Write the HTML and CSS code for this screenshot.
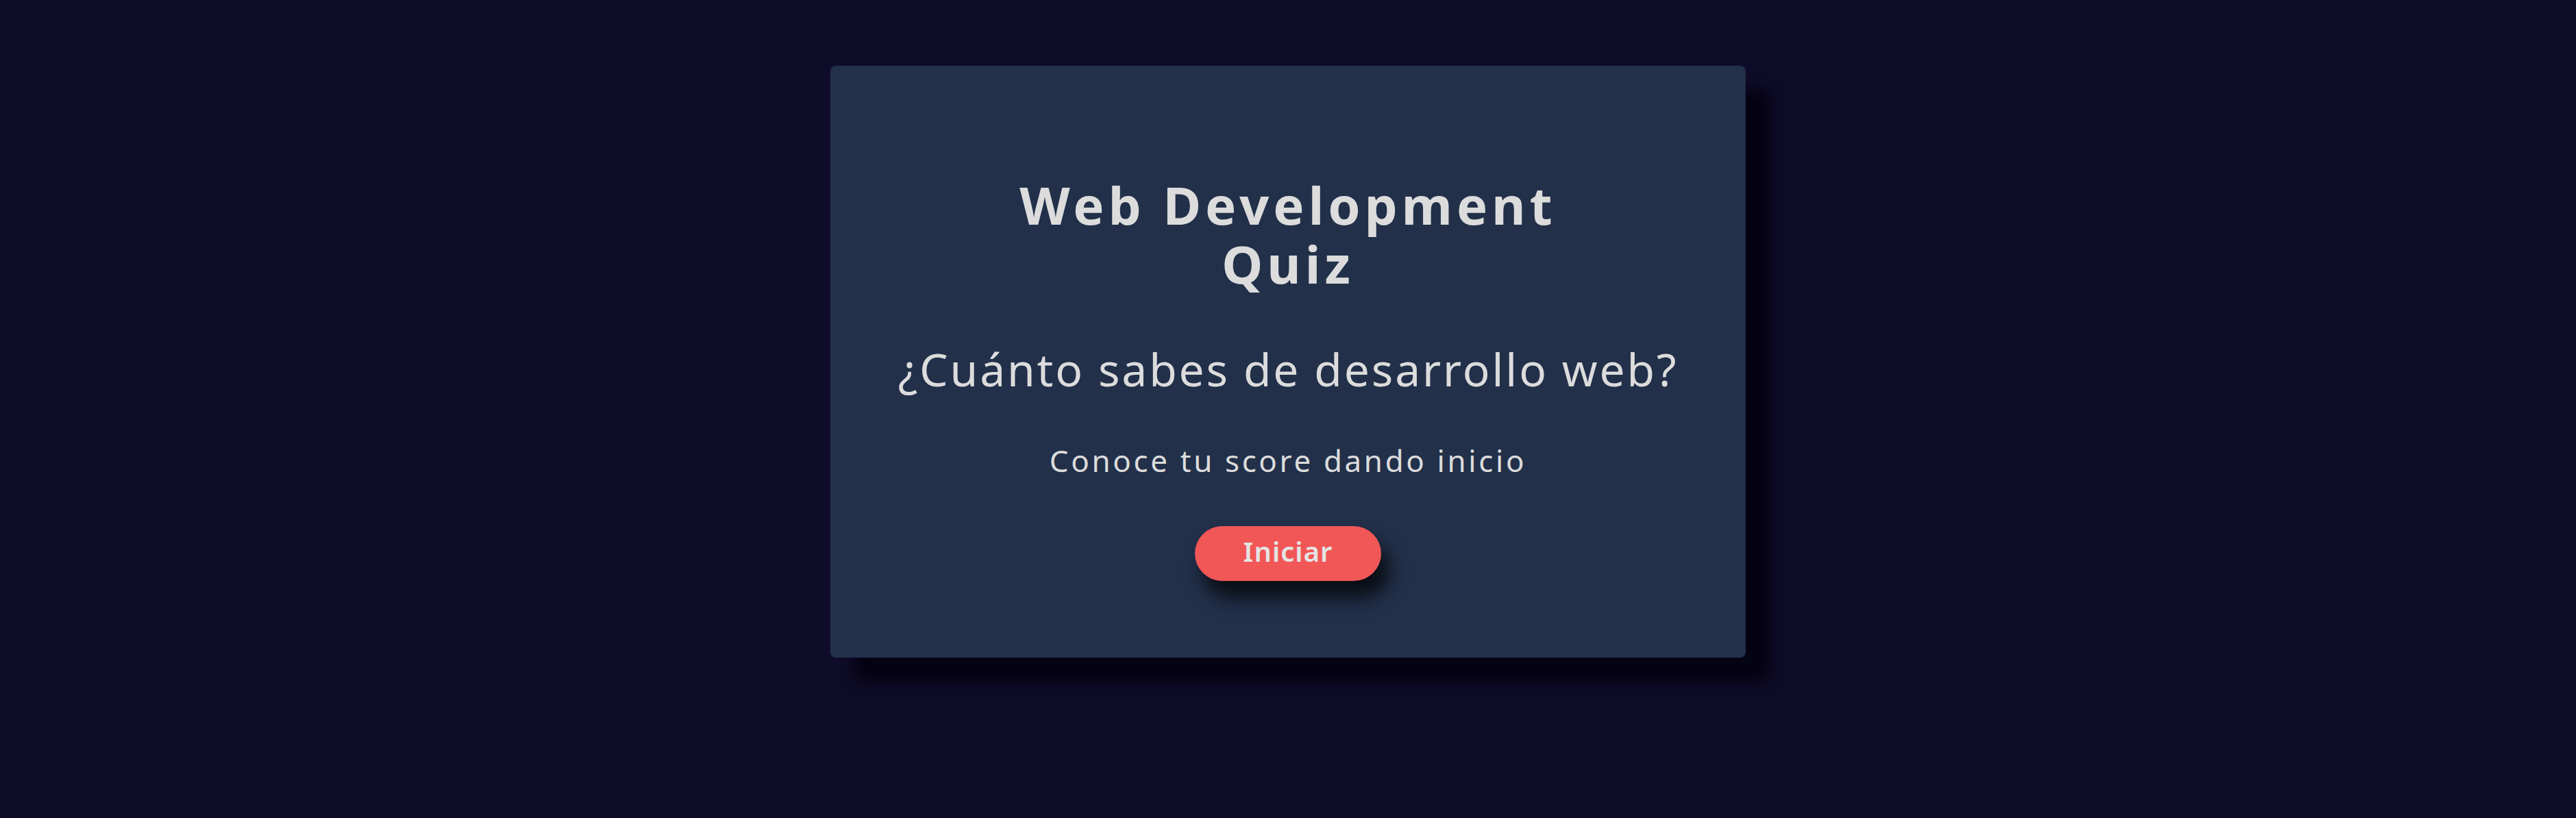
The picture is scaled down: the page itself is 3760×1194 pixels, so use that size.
FILE: index.html
```html
<!DOCTYPE html>
<html lang="es">
<head>
<meta charset="utf-8">
<title>Web Development Quiz</title>
<link rel="stylesheet" href="styles.css">
</head>
<body>
<main class="page">
  <section class="card">
    <h1 class="title">Web Development Quiz</h1>
    <h2 class="subtitle">¿Cuánto sabes de desarrollo web?</h2>
    <p class="lead">Conoce tu score dando inicio</p>
    <button class="start">Iniciar</button>
  </section>
</main>
</body>
</html>
```
FILE: styles.css
```css
html, body {
  margin: 0;
  padding: 0;
  background: #0f0c29;
  height: 100%;
}
body {
  font-family: "Noto Sans", "Open Sans", sans-serif;
  color: #dcdcdc;
}
.page {
  display: flex;
  justify-content: center;
  padding-top: 96px;
}
.card {
  width: 1336px;
  height: 864px;
  box-sizing: border-box;
  background: #22304a;
  border-radius: 8px;
  box-shadow: 35px 35px 20px #040312;
  display: flex;
  flex-direction: column;
  align-items: center;
  padding-top: 160px;
}
.title {
  margin: 0;
  width: 840px;
  text-align: center;
  font-size: 76px;
  line-height: 86px;
  font-weight: 700;
  letter-spacing: 6px;
}
.subtitle {
  margin: 70px 0 0;
  font-size: 66px;
  line-height: 80px;
  font-weight: 400;
  letter-spacing: 2.8px;
}
.lead {
  margin: 66px 0 0;
  font-size: 44px;
  line-height: 56px;
  letter-spacing: 3.6px;
}
.start {
  margin-top: 68px;
  width: 272px;
  height: 80px;
  padding: 0 0 8px;
  border: none;
  border-radius: 40px;
  background: #f25757;
  color: #e4e4e4;
  font-family: inherit;
  font-size: 40px;
  font-weight: 600;
  letter-spacing: 1px;
  box-shadow: 12px 24px 28px rgba(0, 0, 0, 0.75);
  cursor: pointer;
}
```
